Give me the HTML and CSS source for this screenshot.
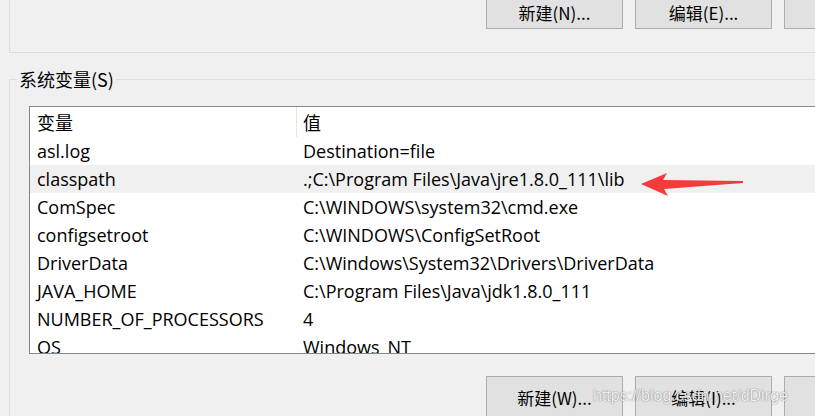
FILE: index.html
```html
<!DOCTYPE html>
<html lang="zh-CN">
<head>
    <meta charset="UTF-8">
    <title>环境变量</title>
    <link rel="stylesheet" href="styles.css">
</head>
<body>
    <div class="window">
        <div class="group group-user">
            <div class="btn-row btn-row-top">
                <button class="btn">新建(N)...</button>
                <button class="btn">编辑(E)...</button>
                <button class="btn">删除(D)</button>
            </div>
        </div>

        <fieldset class="group group-system">
            <legend>系统变量(S)</legend>

            <div class="list">
                <div class="list-head">
                    <div class="cell cell-name">变量</div>
                    <div class="cell cell-value">值</div>
                </div>
                <div class="row"><div class="cell cell-name">asl.log</div><div class="cell cell-value">Destination=file</div></div>
                <div class="row row-hover">
                    <div class="cell cell-name">classpath</div>
                    <div class="cell cell-value">.;C:\Program Files\Java\jre1.8.0_111\lib</div>
                    <svg class="arrow" width="110" height="26" viewBox="0 0 110 26">
                        <polygon points="0,11 26,0 22,7 102,8 102,10 23,16 27,23" fill="#f23b3b"/>
                    </svg>
                </div>
                <div class="row"><div class="cell cell-name">ComSpec</div><div class="cell cell-value">C:\WINDOWS\system32\cmd.exe</div></div>
                <div class="row"><div class="cell cell-name">configsetroot</div><div class="cell cell-value">C:\WINDOWS\ConfigSetRoot</div></div>
                <div class="row"><div class="cell cell-name">DriverData</div><div class="cell cell-value">C:\Windows\System32\Drivers\DriverData</div></div>
                <div class="row"><div class="cell cell-name">JAVA_HOME</div><div class="cell cell-value">C:\Program Files\Java\jdk1.8.0_111</div></div>
                <div class="row"><div class="cell cell-name">NUMBER_OF_PROCESSORS</div><div class="cell cell-value">4</div></div>
                <div class="row"><div class="cell cell-name">OS</div><div class="cell cell-value">Windows_NT</div></div>
            </div>

            <div class="btn-row btn-row-bottom">
                <button class="btn">新建(W)...</button>
                <button class="btn">编辑(I)...</button>
                <button class="btn">删除(L)</button>
                <span class="watermark">https://blog.csdn.net/dDirge</span>
            </div>
        </fieldset>
    </div>
</body>
</html>
```

FILE: styles.css
```css
* {
    margin: 0;
    padding: 0;
    box-sizing: border-box;
}

body {
    background: #f0f0f0;
    font-family: 'Open Sans', 'Noto Sans CJK SC', sans-serif;
    font-size: 18px;
    color: #000;
    overflow: hidden;
}

.window {
    width: 815px;
    height: 416px;
    overflow: hidden;
}

.group {
    margin-left: 9px;
    width: 900px;
    border: 1px solid #dcdcdc;
}

.group-user {
    border-top: none;
    height: 53px;
}

.group-system {
    margin-top: 14px;
    padding: 0;
    min-inline-size: 0;
    height: 400px;
}

.group-system legend {
    margin-left: 7px;
    padding: 0 2px;
    line-height: 24px;
    font-family: 'Noto Sans CJK SC', sans-serif;
    font-size: 18px;
}

.btn-row {
    display: flex;
    gap: 12px;
    padding-left: 476px;
    position: relative;
}

.group-system .btn-row {
    padding-left: 476px;
    margin-top: 22px;
}

.btn {
    width: 137px;
    height: 42px;
    flex-shrink: 0;
    background: #e1e1e1;
    border: 1px solid #adadad;
    font-family: 'Noto Sans CJK SC', sans-serif;
    font-size: 17px;
    color: #000;
}

.btn-row-top .btn {
    height: 29px;
    border-top: none;
    padding-bottom: 5px;
}

.list {
    margin: 15px 0 0 19px;
    width: 900px;
    height: 248px;
    background: #fff;
    border: 1px solid #828790;
    overflow: hidden;
}

.list-head,
.row {
    display: flex;
    align-items: center;
    position: relative;
}

.list-head {
    height: 30px;
}

.row {
    height: 28px;
}

.row-hover {
    background: #f0f0f0;
}

.cell {
    padding-left: 7px;
    white-space: nowrap;
}

.cell-name {
    width: 266px;
}

.list-head .cell {
    font-family: 'Noto Sans CJK SC', sans-serif;
    height: 30px;
    line-height: 30px;
}

.list-head .cell-value {
    border-left: 1px solid #e5e5e5;
    padding-left: 6px;
}

.arrow {
    position: absolute;
    left: 611px;
    top: 8px;
}

.watermark {
    position: absolute;
    left: 583px;
    top: 11px;
    font-family: 'Liberation Sans', sans-serif;
    font-size: 16px;
    color: rgba(255, 255, 255, 0.9);
    text-shadow: 0 0 1px rgba(0, 0, 0, 0.45), 0 0 2px rgba(0, 0, 0, 0.2);
}
```
